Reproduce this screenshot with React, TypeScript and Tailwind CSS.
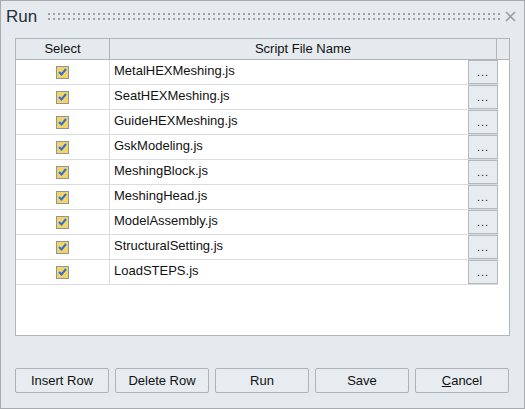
const scripts = [
  "MetalHEXMeshing.js",
  "SeatHEXMeshing.js",
  "GuideHEXMeshing.js",
  "GskModeling.js",
  "MeshingBlock.js",
  "MeshingHead.js",
  "ModelAssembly.js",
  "StructuralSetting.js",
  "LoadSTEPS.js",
];

function Checkbox() {
  return (
    <div className="w-[13px] h-[13px] border border-[#8c959c] bg-[#f4d466] flex items-center justify-center">
      <svg width="9" height="8" viewBox="0 0 9 8">
        <path d="M1 4 L3.5 6.5 L8 1" fill="none" stroke="#2f6fd6" strokeWidth="2" />
      </svg>
    </div>
  );
}

function DialogButton({ children }: { children: React.ReactNode }) {
  return (
    <button className="w-[94px] h-[25px] border border-[#adb3b8] rounded-[2px] bg-[#e6ecef] text-[13px] text-[#111]">
      {children}
    </button>
  );
}

export default function App() {
  return (
    <div
      className="w-[525px] h-[409px] bg-[#e4eaed] border border-[#a7abae] flex flex-col text-[#111]"
      style={{ fontFamily: '"Liberation Sans", Arial, sans-serif' }}
    >
      {/* Title bar */}
      <div className="h-[31px] flex items-center pl-[5px] pr-[8px]">
        <span className="text-[17px] text-[#24303c] leading-none">Run</span>
        <svg className="ml-[11px] flex-1 h-[7px]" height="7">
          <defs>
            <pattern id="dots" width="5" height="5" patternUnits="userSpaceOnUse">
              <rect width="2" height="2" fill="#9aa3aa" />
            </pattern>
          </defs>
          <rect width="452" height="7" fill="url(#dots)" />
        </svg>
        <svg className="ml-[4px]" width="11" height="11" viewBox="0 0 11 11">
          <path d="M1 1 L10 10 M10 1 L1 10" stroke="#9aa0a5" strokeWidth="1.6" />
        </svg>
      </div>

      {/* Table */}
      <div className="mx-[14px] mt-[6px] h-[298px] border border-[#b0b5b9] bg-white flex flex-col">
        <div className="flex h-[21px] bg-[#e4eaed] border-b border-[#b0b5b9] text-[13px]">
          <div className="w-[94px] border-r border-[#b0b5b9] flex items-center justify-center">Select</div>
          <div className="flex-1 border-r border-[#b0b5b9] flex items-center justify-center">Script File Name</div>
          <div className="w-[12px]" />
        </div>
        <div className="flex flex-col w-[482px]">
          {scripts.map((name) => (
            <div key={name} className="flex h-[25px] border-b border-[#d9dcde]">
              <div className="w-[94px] border-r border-[#d9dcde] flex items-center justify-center">
                <Checkbox />
              </div>
              <div className="flex-1 pl-[4px] pt-[3px] text-[13px] leading-[16px]">{name}</div>
              <div className="w-[30px] border border-[#b3b8bc] bg-[#e6ecef] flex items-end justify-center pb-[5px] text-[11px] leading-none tracking-[1px]">
                ...
              </div>
            </div>
          ))}
        </div>
      </div>

      {/* Buttons */}
      <div className="flex gap-[6px] ml-[14px] mt-[32px]">
        <DialogButton>Insert Row</DialogButton>
        <DialogButton>Delete Row</DialogButton>
        <DialogButton>Run</DialogButton>
        <DialogButton>Save</DialogButton>
        <DialogButton>
          <span className="underline">C</span>ancel
        </DialogButton>
      </div>
    </div>
  );
}
